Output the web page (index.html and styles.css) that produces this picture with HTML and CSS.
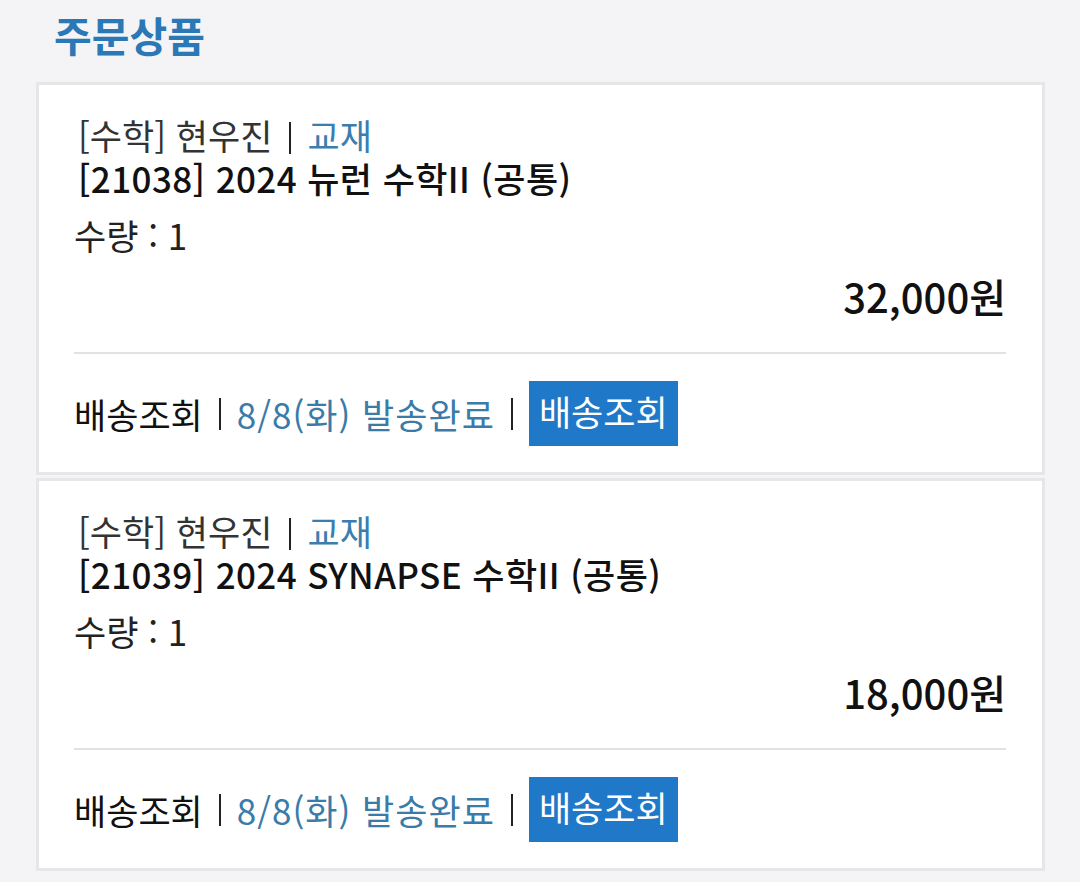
FILE: index.html
```html
<!doctype html>
<html lang="ko">
<head>
<meta charset="utf-8">
<meta name="viewport" content="width=device-width, initial-scale=1.0">
<link rel="stylesheet" href="styles.css">
<title>주문상품</title>
</head>
<body>
<h2 class="title">주문상품</h2>

<div class="item">
    <p class="meta">[수학] 현우진<span class="bar"></span><span class="kind">교재</span></p>
    <p class="name">[21038] 2024 뉴런 수학II (공통)</p>
    <p class="qty">수량 : 1</p>
    <p class="price">32,000원</p>
    <hr />
    <div class="ship">
        <span>배송조회</span>
        <span class="bar"></span>
        <span class="date">8/8(화) 발송완료</span>
        <span class="bar"></span>
        <a class="btn" href="#">배송조회</a>
    </div>
</div>

<div class="item">
    <p class="meta">[수학] 현우진<span class="bar"></span><span class="kind">교재</span></p>
    <p class="name">[21039] 2024 SYNAPSE 수학II (공통)</p>
    <p class="qty">수량 : 1</p>
    <p class="price">18,000원</p>
    <hr />
    <div class="ship">
        <span>배송조회</span>
        <span class="bar"></span>
        <span class="date">8/8(화) 발송완료</span>
        <span class="bar"></span>
        <a class="btn" href="#">배송조회</a>
    </div>
</div>
</body>
</html>
```

FILE: styles.css
```css
h2,
p {
    margin: 0;
    padding: 0;
}
body {
    font-family: "Noto Sans CJK KR", "Noto Sans", sans-serif;
    font-size: 35px;
    line-height: 43px;
    color: #222;
    background-color: #f4f4f6;
    margin: 0;
    padding: 10px 35px 0 36px;
}
.title {
    font-size: 41px;
    line-height: 48px;
    font-weight: 700;
    color: #2a78b6;
    padding-left: 18px;
    margin-bottom: 24px;
}
.item {
    background-color: #fff;
    border: 3px solid #e6e6e8;
    padding: 28px 36px 26px 39px;
    margin-bottom: 3px;
}
.meta {
    color: #333;
}
.kind {
    color: #3a7eb0;
}
.bar {
    display: inline-block;
    width: 2px;
    height: 32px;
    background-color: #222;
    vertical-align: -4px;
    margin: 0 16px 0 17px;
}
.name {
    color: #111;
    font-weight: 500;
    letter-spacing: 0.4px;
}
.qty {
    margin-top: 14px;
    margin-left: -4px;
}
.price {
    margin-top: 19px;
    text-align: right;
    font-size: 40px;
    font-weight: 500;
    color: #111;
}
hr {
    margin: 34px 0 0 -4px;
    border: 0;
    border-bottom: 2px solid #e2e2e4;
}
.ship {
    display: flex;
    align-items: center;
    margin-top: 27px;
    margin-left: -4px;
    color: #111;
}
.ship .bar {
    margin: 0 16px;
}
.ship .date {
    color: #3a7ba8;
    letter-spacing: 1px;
}
.btn {
    display: block;
    background-color: #1f78c8;
    color: #fff;
    text-decoration: none;
    height: 65px;
    line-height: 60px;
    padding: 0 10px;
}
```
